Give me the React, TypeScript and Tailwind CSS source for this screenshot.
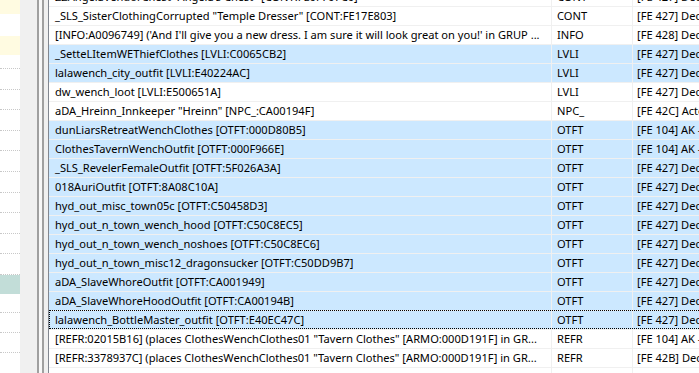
import React from "react";

type Row = { name: string; type: string; plugin: string; selected?: boolean; focused?: boolean };

const rows: Row[] = [
  { name: 'ZZAngelaVendorChest "Angela\'s Chest" [CONT:FE0F707C0]', type: "CONT", plugin: "[FE 427] Decorators.esp" },
  { name: '_SLS_SisterClothingCorrupted "Temple Dresser" [CONT:FE17E803]', type: "CONT", plugin: "[FE 427] Decorators.esp" },
  { name: "[INFO:A0096749] ('And I'll give you a new dress. I am sure it will look great on you!' in GRUP ...", type: "INFO", plugin: "[FE 428] Decorators.esp" },
  { name: "_SetteLItemWEThiefClothes [LVLI:C0065CB2]", type: "LVLI", plugin: "[FE 427] Decorators.esp", selected: true },
  { name: "lalawench_city_outfit [LVLI:E40224AC]", type: "LVLI", plugin: "[FE 427] Decorators.esp", selected: true },
  { name: "dw_wench_loot [LVLI:E500651A]", type: "LVLI", plugin: "[FE 427] Decorators.esp" },
  { name: 'aDA_Hreinn_Innkeeper "Hreinn" [NPC_:CA00194F]', type: "NPC_", plugin: "[FE 42C] Actors.esp" },
  { name: "dunLiarsRetreatWenchClothes [OTFT:000D80B5]", type: "OTFT", plugin: "[FE 104] AK - Lore Friendly", selected: true },
  { name: "ClothesTavernWenchOutfit [OTFT:000F966E]", type: "OTFT", plugin: "[FE 104] AK - Lore Friendly", selected: true },
  { name: "_SLS_RevelerFemaleOutfit [OTFT:5F026A3A]", type: "OTFT", plugin: "[FE 427] Decorators.esp", selected: true },
  { name: "018AuriOutfit [OTFT:8A08C10A]", type: "OTFT", plugin: "[FE 427] Decorators.esp", selected: true },
  { name: "hyd_out_misc_town05c [OTFT:C50458D3]", type: "OTFT", plugin: "[FE 427] Decorators.esp", selected: true },
  { name: "hyd_out_n_town_wench_hood [OTFT:C50C8EC5]", type: "OTFT", plugin: "[FE 427] Decorators.esp", selected: true },
  { name: "hyd_out_n_town_wench_noshoes [OTFT:C50C8EC6]", type: "OTFT", plugin: "[FE 427] Decorators.esp", selected: true },
  { name: "hyd_out_n_town_misc12_dragonsucker [OTFT:C50DD9B7]", type: "OTFT", plugin: "[FE 427] Decorators.esp", selected: true },
  { name: "aDA_SlaveWhoreOutfit [OTFT:CA001949]", type: "OTFT", plugin: "[FE 427] Decorators.esp", selected: true },
  { name: "aDA_SlaveWhoreHoodOutfit [OTFT:CA00194B]", type: "OTFT", plugin: "[FE 427] Decorators.esp", selected: true },
  { name: "lalawench_BottleMaster_outfit [OTFT:E40EC47C]", type: "OTFT", plugin: "[FE 427] Decorators.esp", selected: true, focused: true },
  { name: '[REFR:02015B16] (places ClothesWenchClothes01 "Tavern Clothes" [ARMO:000D191F] in GR...', type: "REFR", plugin: "[FE 104] AK - Lore Friendly" },
  { name: '[REFR:3378937C] (places ClothesWenchClothes01 "Tavern Clothes" [ARMO:000D191F] in GR...', type: "REFR", plugin: "[FE 42B] Decorators.esp" },
  { name: "", type: "", plugin: "" },
];

// left tree pane, only a sliver visible
const side: { h: string; bg: string; dot?: boolean }[] = [
  { h: "h-[14px]", bg: "bg-[#fffbe1]" },
  { h: "h-[22px]", bg: "bg-white" },
  { h: "h-[19px]", bg: "bg-[#fffbe1]" },
  { h: "h-[14px]", bg: "bg-white", dot: true },
  ...Array.from({ length: 10 }, () => ({ h: "h-[20.6px]", bg: "bg-white", dot: true })),
  { h: "h-[19px]", bg: "bg-[#c2ddd8]" },
  { h: "h-[19px]", bg: "bg-white", dot: true },
  { h: "h-[20px]", bg: "bg-white", dot: true },
  { h: "h-[20px]", bg: "bg-white", dot: true },
  { h: "h-[20px]", bg: "bg-white" },
];

export default function App() {
  return (
    <div className="flex h-[373px] w-[699px] overflow-hidden bg-white text-[11.1px] text-black font-['Noto_Sans','Open_Sans',sans-serif]">
      <div className="w-[20px] shrink-0 flex flex-col">
        {side.map((s, i) => (
          <div
            key={i}
            className={`${s.h} ${s.bg} shrink-0 ${s.dot ? "border-b border-dotted border-[#c8c8c8]" : ""}`}
          />
        ))}
      </div>
      <div className="w-[17px] shrink-0 bg-[#f0f0f0]" />
      <div className="w-[2px] shrink-0 bg-[#a0a0a0]" />
      <div className="w-[3px] shrink-0 bg-[#f8f8f8]" />
      <div className="w-[2px] shrink-0 bg-[#a0a0a0]" />
      <div className="w-[4px] shrink-0 bg-[#f0f0f0]" />
      <div className="flex-1 border-l border-[#828790] overflow-hidden">
        <div className="-mt-[12px] flex flex-col">
          {rows.map((r, i) => (
            <div
              key={i}
              className={`relative flex h-[19px] shrink-0 border-b border-[#f0f0f0] ${r.selected ? "bg-[#cce8ff]" : "bg-white"}`}
            >
              <div className="w-[503px] shrink-0 border-r border-[#f0f0f0] pl-[6px] leading-[18px] truncate">
                {r.name}
              </div>
              <div className="w-[81px] shrink-0 border-r border-[#f0f0f0] pl-[5px] leading-[18px] truncate">
                {r.type}
              </div>
              <div className="flex-1 pl-[4px] leading-[18px] whitespace-nowrap overflow-hidden">{r.plugin}</div>
              {r.focused && (
                <div className="absolute left-0 -right-4 -top-px bottom-0 border border-dotted border-black pointer-events-none" />
              )}
            </div>
          ))}
        </div>
      </div>
    </div>
  );
}
